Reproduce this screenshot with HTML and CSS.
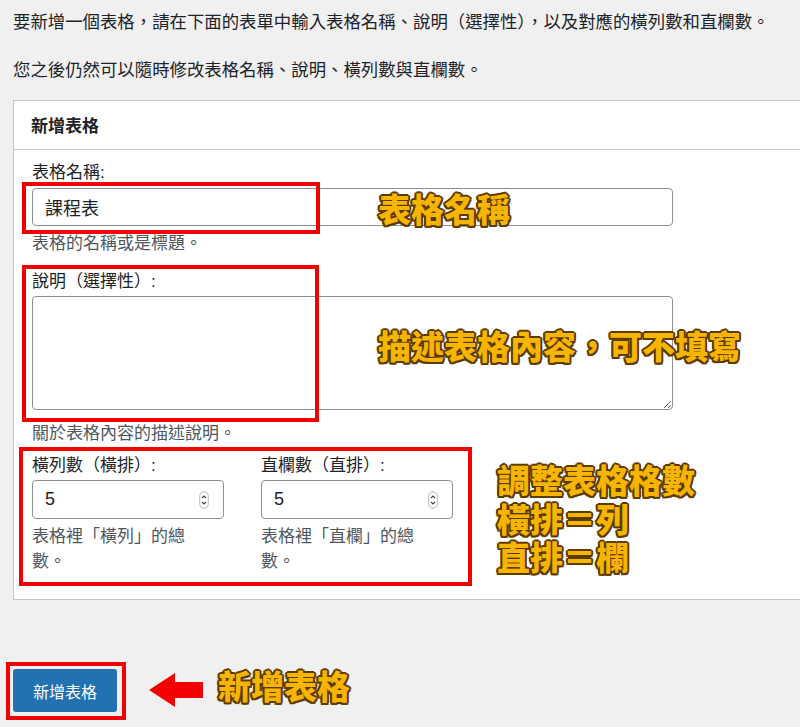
FILE: index.html
```html
<!DOCTYPE html>
<html lang="zh-Hant">
<head>
    <meta charset="UTF-8">
    <meta name="viewport" content="width=device-width, initial-scale=1.0">
    <title>新增表格</title>
    <link rel="stylesheet" href="styles.css">
</head>
<body>
    <div class="wrap">
        <p class="intro">要新增一個表格，請在下面的表單中輸入表格名稱、說明（選擇性），以及對應的橫列數和直欄數。</p>
        <p class="intro">您之後仍然可以隨時修改表格名稱、說明、橫列數與直欄數。</p>

        <div class="card">
            <div class="card-head">新增表格</div>
            <div class="card-body">
                <div class="field">
                    <label for="table_name">表格名稱:</label>
                    <input type="text" id="table_name" class="text-input" value="課程表">
                    <p class="desc">表格的名稱或是標題。</p>
                </div>

                <div class="field">
                    <label for="table_desc">說明（選擇性）:</label>
                    <textarea id="table_desc" class="text-area"></textarea>
                    <p class="desc desc-low">關於表格內容的描述說明。</p>
                </div>

                <div class="field-row">
                    <div class="col">
                        <label for="table_rows">橫列數（橫排）:</label>
                        <div class="num-field">
                            <input type="number" id="table_rows" value="5">
                            <svg class="spin" width="10" height="18" viewBox="0 0 10 18">
                                <rect x="0.75" y="0.75" width="8.5" height="16.5" rx="4.25" fill="#fff" stroke="#b5b8bc" stroke-width="1"/>
                                <path d="M3 7 L5 5 L7 7" fill="none" stroke="#3c434a" stroke-width="1.1"/>
                                <path d="M3 11 L5 13 L7 11" fill="none" stroke="#3c434a" stroke-width="1.1"/>
                            </svg>
                        </div>
                        <p class="desc narrow">表格裡「橫列」的總數。</p>
                    </div>
                    <div class="col">
                        <label for="table_cols">直欄數（直排）:</label>
                        <div class="num-field">
                            <input type="number" id="table_cols" value="5">
                            <svg class="spin" width="10" height="18" viewBox="0 0 10 18">
                                <rect x="0.75" y="0.75" width="8.5" height="16.5" rx="4.25" fill="#fff" stroke="#b5b8bc" stroke-width="1"/>
                                <path d="M3 7 L5 5 L7 7" fill="none" stroke="#3c434a" stroke-width="1.1"/>
                                <path d="M3 11 L5 13 L7 11" fill="none" stroke="#3c434a" stroke-width="1.1"/>
                            </svg>
                        </div>
                        <p class="desc narrow">表格裡「直欄」的總數。</p>
                    </div>
                </div>
            </div>
        </div>

        <button class="btn-primary">新增表格</button>
    </div>

    <!-- annotations drawn over the screenshot -->
    <div class="mark mark-name"></div>
    <div class="mark mark-desc"></div>
    <div class="mark mark-size"></div>
    <div class="mark mark-btn"></div>

    <div class="note note-name">表格名稱</div>
    <div class="note note-desc">描述表格內容，可不填寫</div>
    <div class="note note-size">
        <div class="note-line">調整表格格數</div>
        <div class="note-line">橫排＝列</div>
        <div class="note-line">直排＝欄</div>
    </div>
    <div class="note note-btn">新增表格</div>

    <svg class="arrow" width="56" height="36" viewBox="0 0 56 36">
        <path d="M0 17 L26 0 L26 9 L54 9 L54 25 L26 25 L26 34 Z" fill="#f40000"/>
    </svg>
</body>
</html>
```

FILE: styles.css
```css
body {
    margin: 0;
    background-color: #f0f0f1;
    font-family: "Liberation Sans", "Noto Sans CJK TC", sans-serif;
    color: #1d2327;
    position: relative;
    overflow: hidden;
    height: 727px;
}
.wrap {
    padding: 10px 0 0 13px;
}
.intro {
    margin: 0 0 23px;
    font-size: 17.4px;
    line-height: 25px;
    color: #1d2327;
}
.card {
    margin-top: -6px;
    margin-right: -20px;
    background-color: #fff;
    border: 1px solid #c3c4c7;
}
.card-head {
    height: 48px;
    line-height: 52px;
    padding-left: 17px;
    font-size: 17px;
    font-weight: bold;
    border-bottom: 1px solid #c3c4c7;
}
.card-body {
    padding: 11px 18px 25px;
}
label {
    display: block;
    font-size: 17px;
    line-height: 24px;
    margin-bottom: 3px;
}
.field {
    margin-bottom: 14px;
}
.text-input,
.text-area {
    display: block;
    width: 641px;
    box-sizing: border-box;
    border: 1px solid #8c8f94;
    border-radius: 4px;
    font-family: "Liberation Sans", "Noto Sans CJK TC", sans-serif;
    font-size: 18px;
    color: #1d2327;
    padding: 0 12px;
}
.text-input {
    height: 38px;
}
.text-area {
    height: 114px;
    margin-top: -1px;
}
.desc {
    margin: 5px 0 0;
    font-size: 17px;
    line-height: 25px;
    color: #50575e;
}
.desc.desc-low {
    margin-top: 11px;
}
.desc.narrow {
    max-width: 165px;
}
.field-row {
    display: grid;
    grid-template-columns: 192px 192px;
    column-gap: 37px;
    margin-top: -6px;
}
.field-row label {
    margin-bottom: 2px;
}
.num-field {
    display: flex;
    align-items: center;
    height: 39px;
    box-sizing: border-box;
    border: 1px solid #8c8f94;
    border-radius: 4px;
    padding: 0 14px 0 12px;
}
.num-field input {
    flex: 1;
    min-width: 0;
    border: none;
    outline: none;
    padding: 0;
    font-family: "Liberation Sans", sans-serif;
    font-size: 18px;
    color: #1d2327;
    -moz-appearance: textfield;
}
.num-field input::-webkit-inner-spin-button,
.num-field input::-webkit-outer-spin-button {
    -webkit-appearance: none;
    margin: 0;
}
.spin {
    display: block;
}
.btn-primary {
    display: block;
    margin-top: 69px;
    width: 104px;
    height: 43px;
    padding: 0;
    border: none;
    border-radius: 3px;
    background-color: #2271b1;
    color: #fff;
    font-family: "Liberation Sans", "Noto Sans CJK TC", sans-serif;
    font-size: 16px;
    cursor: pointer;
}

/* red boxes */
.mark {
    position: absolute;
    border: 4px solid #f20000;
    box-sizing: border-box;
}
.mark-name {
    left: 22px;
    top: 182px;
    width: 298px;
    height: 52px;
}
.mark-desc {
    left: 22px;
    top: 265px;
    width: 297px;
    height: 157px;
}
.mark-size {
    left: 19px;
    top: 447px;
    width: 453px;
    height: 139px;
}
.mark-btn {
    left: 6px;
    top: 662px;
    width: 120px;
    height: 58px;
}

/* yellow notes */
.note {
    position: absolute;
    font-family: "Noto Sans CJK TC", sans-serif;
    font-weight: 900;
    font-size: 33px;
    line-height: 38.5px;
    color: #f7b500;
    white-space: nowrap;
    text-shadow:
        2px 0 0 #5a3b00, -2px 0 0 #5a3b00, 0 2px 0 #5a3b00, 0 -2px 0 #5a3b00,
        1.5px 1.5px 0 #5a3b00, -1.5px 1.5px 0 #5a3b00, 1.5px -1.5px 0 #5a3b00, -1.5px -1.5px 0 #5a3b00;
}
.note-line {
    height: 38.5px;
}
.note-name {
    left: 378px;
    top: 189px;
}
.note-desc {
    left: 378px;
    top: 326px;
}
.note-size {
    left: 497px;
    top: 460px;
}
.note-btn {
    left: 218px;
    top: 666px;
}
.arrow {
    position: absolute;
    left: 149px;
    top: 673px;
}
```
